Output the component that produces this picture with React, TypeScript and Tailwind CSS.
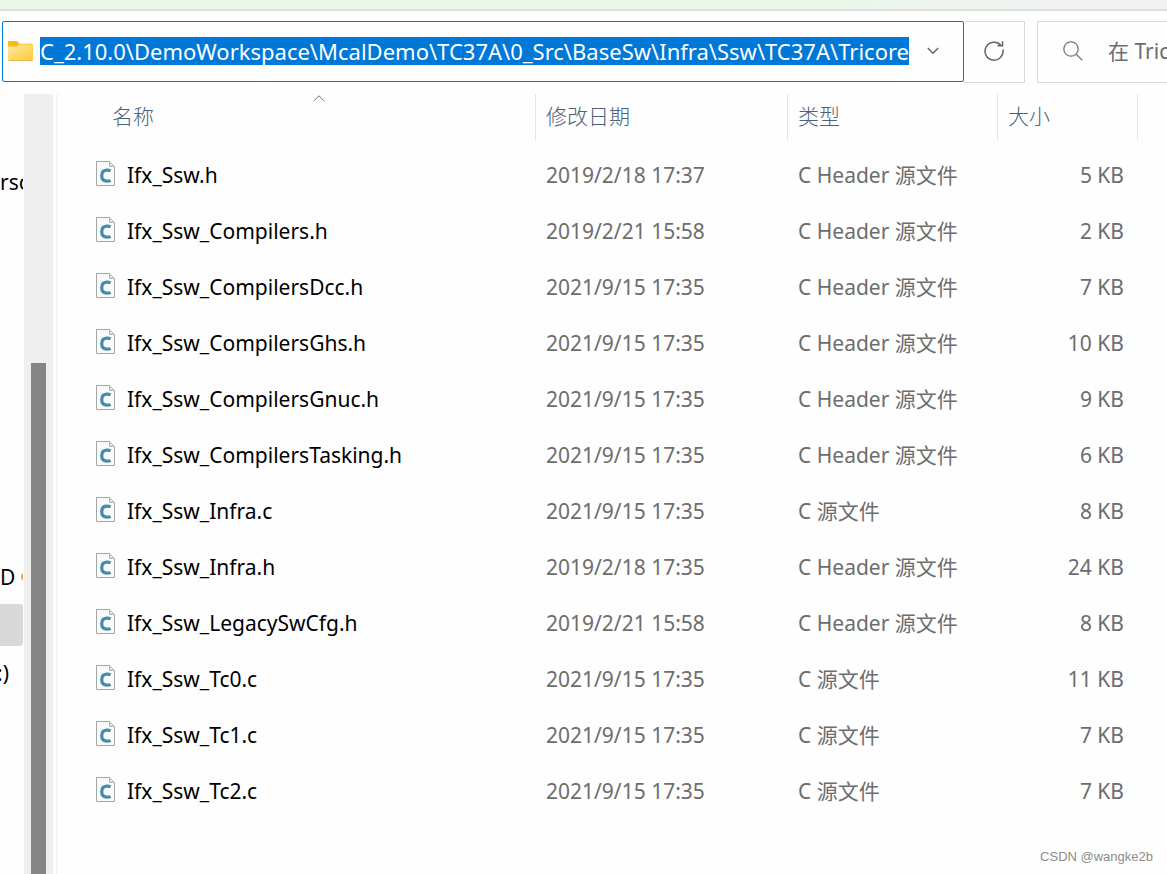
import { useState } from 'react';

const files = [
  { name: 'Ifx_Ssw.h', date: '2019/2/18 17:37', type: 'C Header 源文件', size: '5 KB' },
  { name: 'Ifx_Ssw_Compilers.h', date: '2019/2/21 15:58', type: 'C Header 源文件', size: '2 KB' },
  { name: 'Ifx_Ssw_CompilersDcc.h', date: '2021/9/15 17:35', type: 'C Header 源文件', size: '7 KB' },
  { name: 'Ifx_Ssw_CompilersGhs.h', date: '2021/9/15 17:35', type: 'C Header 源文件', size: '10 KB' },
  { name: 'Ifx_Ssw_CompilersGnuc.h', date: '2021/9/15 17:35', type: 'C Header 源文件', size: '9 KB' },
  { name: 'Ifx_Ssw_CompilersTasking.h', date: '2021/9/15 17:35', type: 'C Header 源文件', size: '6 KB' },
  { name: 'Ifx_Ssw_Infra.c', date: '2021/9/15 17:35', type: 'C 源文件', size: '8 KB' },
  { name: 'Ifx_Ssw_Infra.h', date: '2019/2/18 17:35', type: 'C Header 源文件', size: '24 KB' },
  { name: 'Ifx_Ssw_LegacySwCfg.h', date: '2019/2/21 15:58', type: 'C Header 源文件', size: '8 KB' },
  { name: 'Ifx_Ssw_Tc0.c', date: '2021/9/15 17:35', type: 'C 源文件', size: '11 KB' },
  { name: 'Ifx_Ssw_Tc1.c', date: '2021/9/15 17:35', type: 'C 源文件', size: '7 KB' },
  { name: 'Ifx_Ssw_Tc2.c', date: '2021/9/15 17:35', type: 'C 源文件', size: '7 KB' },
];

function FolderIcon() {
  return (
    <svg width="25" height="20" viewBox="0 0 25 20" className="shrink-0" aria-hidden="true">
      <defs>
        <linearGradient id="folder" x1="0" y1="0" x2="1" y2="1">
          <stop offset="0" stopColor="#ffe9a3" />
          <stop offset="1" stopColor="#ffc938" />
        </linearGradient>
      </defs>
      <path d="M1 0h8l2.500 2.700H24a1 1 0 0 1 1 1V10H0V1a1 1 0 0 1 1-1z" fill="#fbb917" />
      <path d="M0 5.500h8.500L11 3.500h13.500a.5.5 0 0 1 .5.5v15a1 1 0 0 1-1 1H1a1 1 0 0 1-1-1z" fill="url(#folder)" />
      <path d="M1 19.500h23" stroke="#eab54a" strokeWidth="1" />
    </svg>
  );
}

function CFileIcon() {
  return (
    <svg width="19" height="25" viewBox="0 0 19 25" className="mb-[3px] shrink-0" aria-hidden="true">
      <path d="M.5.5h13l5 5v19H.5z" fill="#f8fafb" stroke="#a3a7a9" />
      <path d="M13.500.5v5h5z" fill="#dfe2e3" stroke="#b4b7b9" />
      <path d="M14.600 9.900c-1.100-.5-2.300-.7-3.500-.7-3.600 0-5.400 2.200-5.400 5.500s1.800 5.400 5.400 5.400c1.200 0 2.400-.2 3.500-.7" fill="none" stroke="#468cab" strokeWidth="3.200" />
    </svg>
  );
}

// Left tree, mostly hidden behind its own scrollbar
function NavPane() {
  return (
    <aside className="flex shrink-0 border-r-2 border-[#f5f5f5] pr-[3px]">
      <nav className="mr-px w-[23px] overflow-hidden pt-16 whitespace-nowrap text-black">
        <a href="#personal" className="flex h-12 items-center">rsonal</a>
        <a href="#drive" className="mt-[347px] flex h-12 items-center gap-1.5">
          D
          <span className="h-2 w-2 shrink-0 rounded-full bg-[#f2a13c]" />
        </a>
        <a href="#selected" aria-label="此电脑" className="my-[3px] block h-[42px] rounded-r-[3px] bg-[#d9d9d9]" />
        <a href="#local" className="flex h-12 w-[9px] items-center justify-end">:)</a>
      </nav>
      <div className="w-[29px] bg-[#efefef] pt-[269px] pl-[7px]">
        <div className="h-full w-[15px] bg-[#858585]" />
      </div>
    </aside>
  );
}

function AddressBar() {
  const [path, setPath] = useState('C_2.10.0\\DemoWorkspace\\McalDemo\\TC37A\\0_Src\\BaseSw\\Infra\\Ssw\\TC37A\\Tricore');

  return (
    <div className="flex h-[62px] overflow-hidden pl-[2px]">
      <div className="flex h-[61px] flex-1 items-center rounded-[2px] border border-[#0078d7] pb-[2px] pl-[5px]">
        <FolderIcon />
        <input
          aria-label="地址"
          value={path}
          onChange={(e) => setPath(e.target.value)}
          className="ml-[7px] field-sizing-content h-7 bg-[#0078d7] text-[22px] text-white outline-none"
        />
        <button aria-label="历史记录" className="mr-6 ml-auto flex h-full w-3 items-center justify-center">
          <svg width="12" height="8" viewBox="0 0 12 8" fill="none" stroke="#5f5f5f" strokeWidth="1.300">
            <path d="M.8 1l5.200 5.300L11.200 1" />
          </svg>
        </button>
      </div>
      <button aria-label="刷新" className="flex w-[61px] items-center justify-center border-y border-r border-[#d9d9d9] pb-[2px]">
        <svg width="20" height="20" viewBox="0 0 20 20" fill="none" stroke="#666" strokeWidth="1.500">
          <path d="M18.900 8.500A9 9 0 1 1 16.800 4.200" />
          <path d="M18.500.3v4.500h-5" />
        </svg>
      </button>
      <label className="ml-3 flex w-[130px] items-center border border-r-0 border-[#d9d9d9] pb-[2px] pl-[25px]">
        <svg width="20" height="20" viewBox="0 0 20 20" fill="none" stroke="#777" strokeWidth="1.300" className="shrink-0">
          <circle cx="8" cy="8" r="7.200" />
          <path d="M13.200 13.200l6 6" />
        </svg>
        <input
          aria-label="搜索"
          placeholder="在 Tricore 中搜索"
          className="ml-[25px] w-60 shrink-0 outline-none placeholder:text-[#6d6d6d]"
        />
      </label>
    </div>
  );
}

function FileTable() {
  return (
    <table className="w-full table-fixed border-separate border-spacing-0 text-left whitespace-nowrap text-[#6d6d6d]">
      <colgroup>
        <col />
        <col className="w-[252px]" />
        <col className="w-[210px]" />
        <col className="w-[141px]" />
      </colgroup>
      <thead>
        <tr className="h-[53px] align-top text-[#4c607a]">
          <th className="p-0 pl-11 font-light">
            <div className="relative flex h-[46px] items-center pb-[2px] pl-[10px]">
              名称
              <svg width="12" height="7" viewBox="0 0 12 7" fill="none" stroke="#6d6d6d" className="absolute top-px left-1/2 -ml-[6px]">
                <path d="M.5 6.200L6 .8l5.500 5.400" />
              </svg>
            </div>
          </th>
          <th className="p-0 font-light">
            <div className="flex h-[46px] items-center border-l border-[#e5e5e5] pb-[2px] pl-[10px]">修改日期</div>
          </th>
          <th className="p-0 font-light">
            <div className="flex h-[46px] items-center border-l border-[#e5e5e5] pb-[2px] pl-[10px]">类型</div>
          </th>
          <th className="p-0 font-light">
            <div className="flex h-[46px] items-center border-x border-[#e5e5e5] pb-[2px] pl-[10px]">大小</div>
          </th>
        </tr>
      </thead>
      <tbody>
        {files.map((file) => (
          <tr key={file.name} className="h-14">
            <td className="p-0 pl-[38px]">
              <div className="flex items-center gap-3 text-black">
                <CFileIcon />
                {file.name}
              </div>
            </td>
            <td className="p-0 pl-[11px]">{file.date}</td>
            <td className="p-0 pl-[11px]">{file.type}</td>
            <td className="p-0 pr-[14px] text-right">{file.size}</td>
          </tr>
        ))}
      </tbody>
    </table>
  );
}

export default function App() {
  return (
    <div className="flex min-h-screen flex-col overflow-hidden bg-[#fefefe] font-['Noto_Sans','Noto_Sans_CJK_SC',sans-serif] text-[21px] leading-7">
      <div className="mb-[10px] h-[11px] border-b-2 border-black/8 bg-linear-to-r from-[#eaf7ea] from-70% to-[#f2f2f2] to-95%" />
      <AddressBar />
      <div className="mt-[11px] flex flex-1">
        <NavPane />
        <main className="flex min-w-0 flex-1 flex-col pr-[29px]">
          <FileTable />
          <footer className="-mr-[15px] mt-auto pb-2 text-right font-['Liberation_Sans',sans-serif] text-[13px] leading-[18px] text-[#8c8c8c]">
            CSDN @wangke2b
          </footer>
        </main>
      </div>
    </div>
  );
}
